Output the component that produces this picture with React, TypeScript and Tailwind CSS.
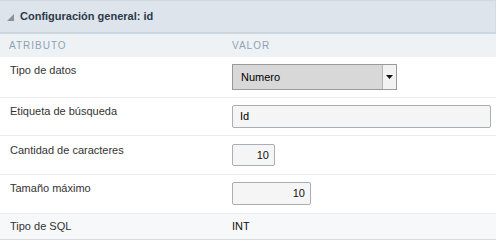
import React from 'react';

const rows = [
  { label: 'Tipo de datos', kind: 'select', h: 'h-[41px]', pt: 'pt-[7px]' },
  { label: 'Etiqueta de búsqueda', kind: 'text', h: 'h-[38px]', pt: 'pt-[7px]' },
  { label: 'Cantidad de caracteres', kind: 'num-sm', h: 'h-[39px]', pt: 'pt-[8px]' },
  { label: 'Tamaño máximo', kind: 'num-md', h: 'h-[39px]', pt: 'pt-[7px]' },
];

const Value: React.FC<{ kind: string }> = ({ kind }) => {
  if (kind === 'select') {
    return (
      <div className="flex h-[26px] w-[165px] border border-[#9a9a9a] bg-[#d8d8d8]">
        <span className="flex-1 pl-[8px] text-[11px] leading-[24px] text-black">Numero</span>
        <span className="flex w-[14px] items-center justify-center border-l border-[#b5b5b5] bg-[#f2f2f2]">
          <svg width="7" height="4" viewBox="0 0 7 4">
            <path d="M0 0h7L3.5 4z" fill="#111" />
          </svg>
        </span>
      </div>
    );
  }
  if (kind === 'text') {
    return (
      <div className="h-[23px] w-[259px] rounded-[2px] border border-[#a9aeb6] bg-[#f5f5f5] pl-[7px] text-[11px] leading-[21px] text-black">
        Id
      </div>
    );
  }
  const w = kind === 'num-sm' ? 'w-[43px] h-[22px] leading-[20px]' : 'w-[79px] h-[23px] leading-[21px]';
  return (
    <div className={`${w} rounded-[2px] border border-[#a9aeb6] bg-[#f5f5f5] pr-[5px] text-right text-[11px] text-[#111]`}>
      10
    </div>
  );
};

export default function App() {
  return (
    <div className="w-[496px] bg-white font-['Liberation_Sans',Arial,sans-serif] text-[#333]">
      <div className="flex h-[34px] items-center border-t border-b-2 border-r border-t-[#cfd8e0] border-b-[#cbd6de] border-r-[#d3dce4] bg-[#dde4eb] pl-[7px]">
        <svg width="7" height="7" viewBox="0 0 7 7" className="mr-[6px] mt-[1px]">
          <path d="M7 0v7H0z" fill="#8a939c" />
        </svg>
        <span className="text-[11px] font-bold text-[#2d3a48]">Configuración general: id</span>
      </div>
      <div className="flex h-[23px] items-center bg-[#eef2f5] text-[10px] tracking-[1px] text-[#8fa2b6]">
        <span className="w-[232px] pl-[9px]">ATRIBUTO</span>
        <span>VALOR</span>
      </div>
      {rows.map(r => (
        <div key={r.label} className={`flex ${r.h} ${r.pt} border-b border-[#e9edf0]`}>
          <span className="w-[232px] pl-[10px] text-[11px] leading-[13px]">{r.label}</span>
          <Value kind={r.kind} />
        </div>
      ))}
      <div className="flex h-[26px] border-b border-[#d5dde3] bg-[#f7f8fa] pt-[6px] text-[11px] leading-[13px]">
        <span className="w-[232px] pl-[10px]">Tipo de SQL</span>
        <span className="text-[#111]">INT</span>
      </div>
    </div>
  );
}
